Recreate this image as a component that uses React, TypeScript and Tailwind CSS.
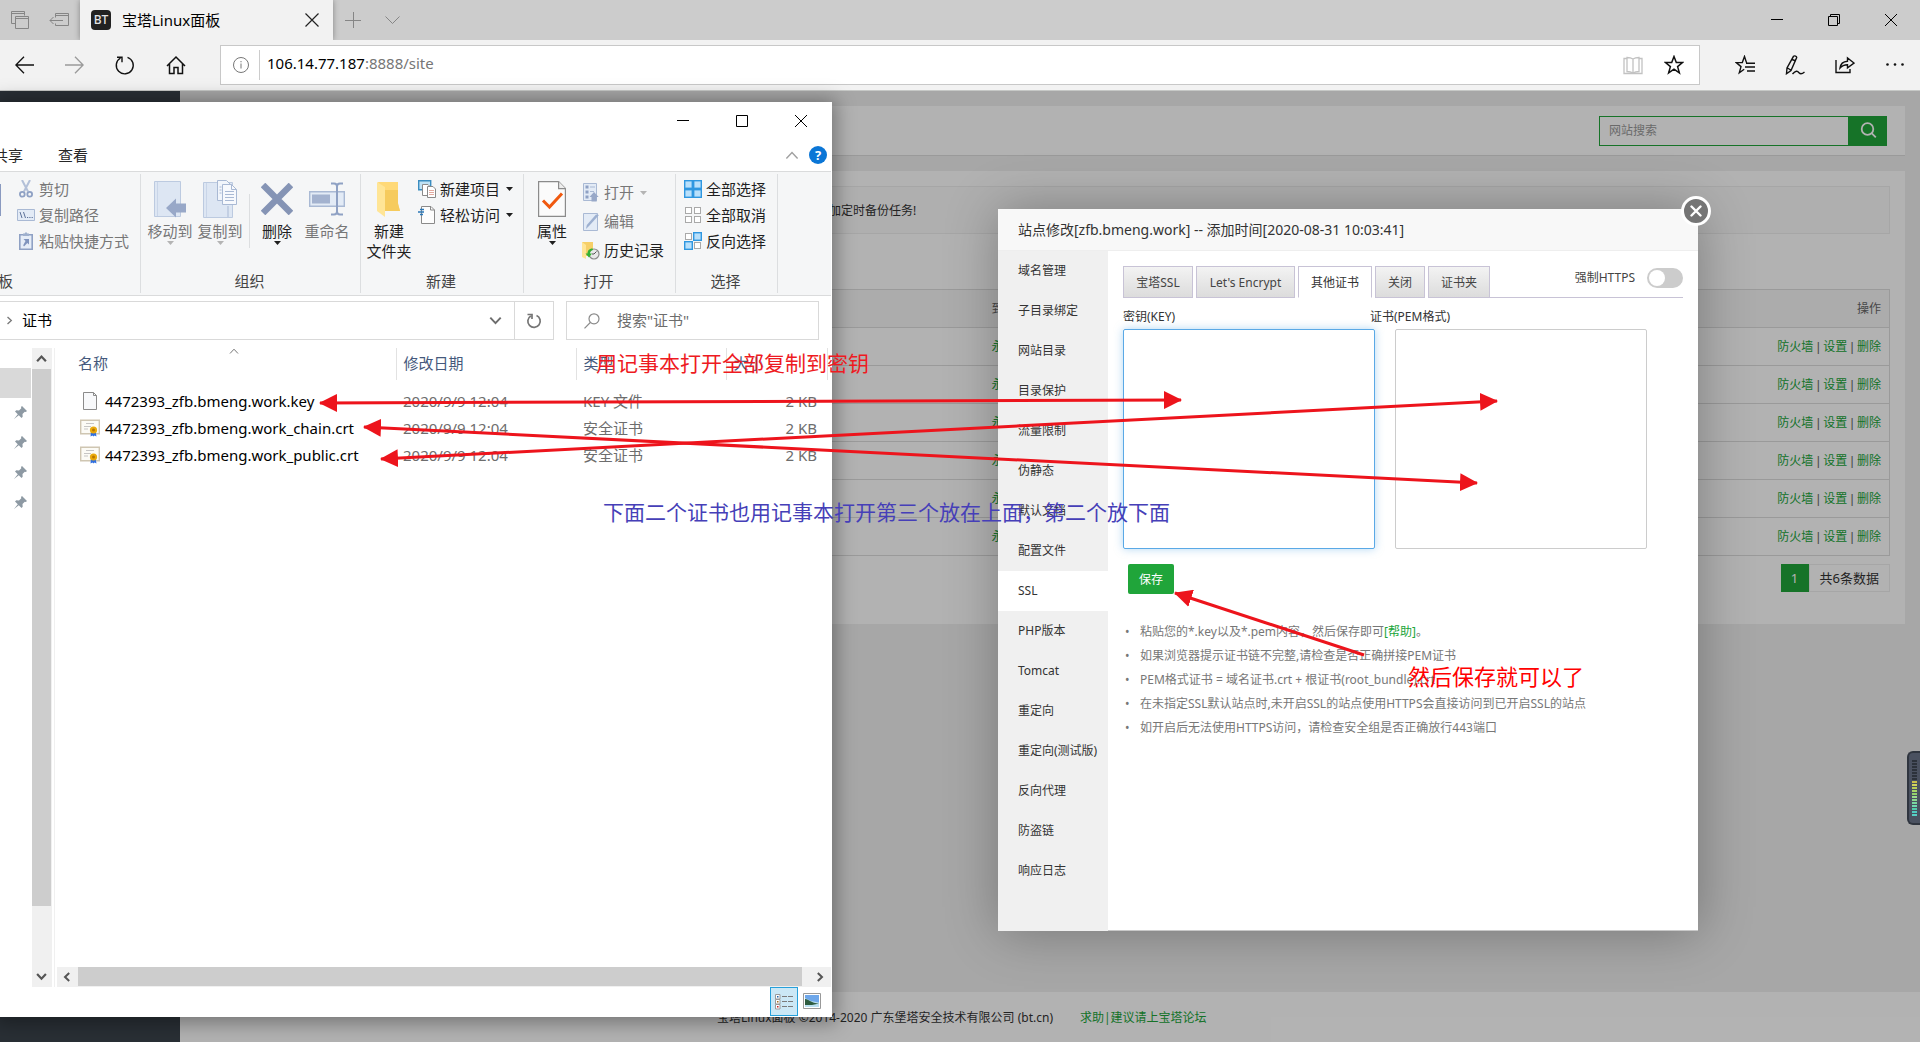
import React from "react";

const GREY = "#5f6368";

/* ---------- shared glyphs ---------- */

function Chevron({ dir, size = 10, color = GREY, weight = 2 }: { dir: "up" | "down" | "left" | "right"; size?: number; color?: string; weight?: number }) {
  const d = {
    up: "M1 7.5 5 3.2 9 7.5",
    down: "M1 2.8 5 7 9 2.8",
    left: "M7.2 1 3 5 7.2 9",
    right: "M2.8 1 7 5 2.8 9",
  }[dir];
  return (
    <svg width={size} height={size} viewBox="0 0 10 10" fill="none" stroke={color} strokeWidth={weight} className="shrink-0" aria-hidden="true">
      <path d={d} />
    </svg>
  );
}

function Caret({ muted = false }: { muted?: boolean }) {
  return (
    <svg width="7" height="4" viewBox="0 0 7 4" fill={muted ? "#b4b4b4" : "#1f1f1f"} className="shrink-0" aria-hidden="true">
      <path d="M0 0h7L3.5 4z" />
    </svg>
  );
}

/* ---------- browser chrome ---------- */

function TabStrip() {
  return (
    <div className="flex h-10 items-stretch bg-[#cccccc]">
      <div className="flex w-20 items-center gap-5 pl-[11px]">
        <button type="button" aria-label="标签页组" className="flex">
          <svg width="18" height="18" viewBox="0 0 18 18" fill="none" stroke="#858585">
            <path d="M4.5 12.5h-4v-12h13v4M.5 2.5h13M4.5 5.5h13v12h-13zM4.500 7.500h13" />
          </svg>
        </button>
        <button type="button" aria-label="搁置标签页" className="flex">
          <svg width="20" height="14" viewBox="0 0 20 14" fill="none" stroke="#858585">
            <path d="M6.500 4.500v-4h13v12h-13v-2M6.500 2.500h13M14 7.500H1M4.500 4 1 7.500 4.500 11" />
          </svg>
        </button>
      </div>
      <div className="flex w-[253px] items-center bg-[#f2f2f2] pl-[11px] pr-[14px] shadow-[0_0_6px_rgba(0,0,0,0.35)]">
        <span className="flex size-5 items-center justify-center rounded bg-[#222222] text-xs font-medium leading-5 text-[#e4e4e4]">BT</span>
        <span className="ml-[11px] flex-1 pb-px text-[15px] leading-5 text-black">宝塔Linux面板</span>
        <button type="button" aria-label="关闭标签页" className="flex">
          <svg width="14" height="14" viewBox="0 0 14 14" stroke="#222" strokeWidth="1.200"><path d="M.5.5l13 13M13.500.5l-13 13" /></svg>
        </button>
      </div>
      <div className="flex flex-1 items-center gap-6 pl-3">
        <button type="button" aria-label="新建标签页" className="flex">
          <svg width="16" height="16" viewBox="0 0 16 16" stroke="#858585"><path d="M0 8.500h16M8.500 0v16" /></svg>
        </button>
        <button type="button" aria-label="标签页预览" className="flex">
          <svg width="15" height="9" viewBox="0 0 15 9" fill="none" stroke="#858585"><path d="M.5.5l7 7 7-7" /></svg>
        </button>
      </div>
      <div className="flex items-center gap-[45px] pr-[23px]">
        <button type="button" aria-label="最小化" className="flex">
          <svg width="12" height="12" viewBox="0 0 12 12" stroke="#000"><path d="M0 5.500h12" /></svg>
        </button>
        <button type="button" aria-label="还原" className="flex">
          <svg width="12" height="12" viewBox="0 0 12 12" fill="none" stroke="#000"><path d="M.5 2.500h9v9h-9zM2.500 2V.5h9v9H10" /></svg>
        </button>
        <button type="button" aria-label="关闭" className="flex">
          <svg width="12" height="12" viewBox="0 0 12 12" stroke="#000"><path d="M0 0l12 12M12 0L0 12" /></svg>
        </button>
      </div>
    </div>
  );
}

const STAR = "M10 1.500l2.300 6.100h6.200l-4.900 4 1.800 6.300L10 14.200l-5.400 3.700 1.800-6.300-4.900-4h6.200z";

function AddressRow() {
  return (
    <div className="flex h-[51px] items-center border-b border-[#c6c8c6] bg-[#f2f2f2]">
      <div className="flex w-[220px] shrink-0 items-center gap-[31px] pl-[15px]">
        <button type="button" aria-label="后退" className="flex">
          <svg width="19" height="18" viewBox="0 0 19 18" fill="none" stroke="#111" strokeWidth="1.300"><path d="M19 9H1M9 .8.9 9 9 17.200" /></svg>
        </button>
        <button type="button" aria-label="前进" className="flex">
          <svg width="19" height="18" viewBox="0 0 19 18" fill="none" stroke="#9a9a9a" strokeWidth="1.300"><path d="M0 9h18M10 .8 18.100 9 10 17.200" /></svg>
        </button>
        <button type="button" aria-label="刷新" className="flex">
          <svg width="20" height="20" viewBox="0 0 20 20" fill="none" stroke="#111" strokeWidth="1.400"><path d="M12.500 2.300a8.500 8.500 0 1 1-7 .7M2 2.200h5v5" /></svg>
        </button>
        <button type="button" aria-label="主页" className="flex">
          <svg width="20" height="20" viewBox="0 0 20 20" fill="none" stroke="#111" strokeWidth="1.500"><path d="M1 11l9-9 9 9M3.500 9v9.500h4.500v-6h4v6h4.500V9" /></svg>
        </button>
      </div>
      <div className="flex h-10 flex-1 items-center border border-[#c8c8c8] bg-white pl-3 pr-[15px]">
        <svg width="16" height="16" viewBox="0 0 16 16" fill="none" stroke="#777" aria-hidden="true"><circle cx="8" cy="8" r="7.500" /><path d="M8 6.500v5M8 4v1.300" /></svg>
        <div className="ml-[10px] h-[30px] border-l border-[#cccccc]" />
        <div className="ml-[7px] flex-1 pb-1 text-[15px] leading-5 text-[#767676]"><span className="text-black">106.14.77.187</span>:8888/site</div>
        <button type="button" aria-label="阅读视图" className="mr-[21px] flex">
          <svg width="20" height="19" viewBox="0 0 20 19" fill="none" stroke="#c2c2c2" strokeWidth="1.300"><path d="M4 2.500H1v15h18v-15h-3M10 3c-2-1.300-4-1.500-6-1.500v14c2 0 4 .2 6 1.500 2-1.300 4-1.500 6-1.500v-14c-2 0-4 .2-6 1.500zM10 3v14" /></svg>
        </button>
        <button type="button" aria-label="添加到收藏夹" className="flex">
          <svg width="20" height="20" viewBox="0 0 20 20" fill="none" stroke="#111" strokeWidth="1.500"><path d={STAR} /></svg>
        </button>
      </div>
      <div className="flex w-[220px] shrink-0 items-center justify-end gap-[30px] pr-[15px]">
        <button type="button" aria-label="收藏夹" className="flex">
          <svg width="20" height="20" viewBox="0 0 20 20" fill="none" stroke="#111" strokeWidth="1.400"><path d="M11.500 7.600 9.500 1.500 7.300 7.600H1.200l4.800 4-1.700 6.200 4.900-3.500M11 8.200h9M10 12h10M12 16h8" /></svg>
        </button>
        <button type="button" aria-label="添加笔记" className="flex">
          <svg width="20" height="20" viewBox="0 0 20 20" fill="none" stroke="#111" strokeWidth="1.400"><path d="M8.500 1.300c1-.9 3.300-.2 3.200 1.300L6 15.500l-4.500 3.200L2 13zM7 4.500l4 1.500M2.500 13l3.200 2M7.500 19c3-3.500 5-3.500 6.500-1.200 1.500 1.700 3.200 1.200 5.500-.8" /></svg>
        </button>
        <button type="button" aria-label="共享" className="flex">
          <svg width="20" height="20" viewBox="0 0 20 20" fill="none" stroke="#111" strokeWidth="1.400"><path d="M1 5v12.500h14V14M5 13c.5-4 3-6.500 7.500-6.800V3l6.500 5-6.500 4.800V9.700C9.500 9.700 7 10.600 5 13z" /></svg>
        </button>
        <button type="button" aria-label="设置及其他" className="flex">
          <svg width="20" height="20" viewBox="0 0 20 20" fill="#111"><circle cx="2.500" cy="9.500" r="1.300" /><circle cx="10" cy="9.500" r="1.300" /><circle cx="17.500" cy="9.500" r="1.300" /></svg>
        </button>
      </div>
    </div>
  );
}

/* ---------- panel page behind the windows ---------- */

const SITE_ROWS = [1, 2, 3, 4, 5, 6];

function SitePage() {
  return (
    <div className="flex min-h-full flex-1 text-xs">
      <aside className="w-[180px] shrink-0 bg-[#3c444d]" />
      <div className="flex flex-1 flex-col bg-[#f0f0f0]">
        <div className="flex flex-1 flex-col px-[15px] pt-[15px]">
          <div className="flex h-[50px] items-center justify-end border-b border-[#dddddd] bg-white pr-[18px]">
            <form className="flex h-[30px]">
              <input type="text" aria-label="网站搜索" placeholder="网站搜索" className="w-[250px] border border-[#20a53a] bg-white px-[9px] pt-px text-xs placeholder:text-[#999999]" />
              <button type="button" aria-label="搜索" className="flex w-[38px] items-center justify-center bg-[#20a53a]">
                <svg width="17" height="17" viewBox="0 0 17 17" fill="none" stroke="#fff" strokeWidth="1.800"><circle cx="7.500" cy="7" r="5.800" /><path d="M11.800 11.300l4 4" /></svg>
              </button>
            </form>
          </div>
          <div className="mt-[15px] bg-white px-[15px] pb-8 pt-[15px]">
            <div className="flex h-12 items-center border border-[#eeeeee] bg-[#fbfbfb] pl-[618px] pt-px text-[#333333]">加定时备份任务!</div>
            <table className="mt-[55px] w-full table-fixed border-collapse border border-[#dddddd]">
              <colgroup>
                <col className="w-[773px]" />
                <col />
                <col className="w-[200px]" />
              </colgroup>
              <thead>
                <tr className="h-[38px] border-b border-[#dddddd] bg-[#f6f6f6] text-[#666666]">
                  <th />
                  <th className="pl-2 text-left font-normal">到期时间</th>
                  <th className="pr-2 text-right font-normal">操作</th>
                </tr>
              </thead>
              <tbody>
                {SITE_ROWS.map((row) => (
                  <tr key={row} className="h-[38px] border-b border-[#dddddd] text-[#666666]">
                    <td />
                    <td className="pl-2"><a href="#expire" className="text-[#20a53a]">永久</a></td>
                    <td className="pr-2 text-right font-['Liberation_Sans','Noto_Sans_CJK_SC',sans-serif]">
                      <a href="#firewall" className="text-[#20a53a]">防火墙</a> | <a href="#settings" className="text-[#20a53a]">设置</a> | <a href="#delete" className="text-[#20a53a]">删除</a>
                    </td>
                  </tr>
                ))}
              </tbody>
            </table>
            <div className="mt-2 flex h-7 justify-end text-[13px] leading-7">
              <span className="w-7 bg-[#20a53a] text-center text-white">1</span>
              <span className="flex items-center border border-[#eeeeee] px-[10px] text-[#333333]">共6条数据</span>
            </div>
          </div>
        </div>
        <footer className="flex h-[50px] items-center gap-[27px] bg-white pl-[537px] pt-[2px] text-[#333333]">
          <span>宝塔Linux面板 ©2014-2020 广东堡塔安全技术有限公司 (bt.cn)</span>
          <a href="#forum" className="text-[#20a53a]">求助|建议请上宝塔论坛</a>
        </footer>
      </div>
    </div>
  );
}

/* ---------- file explorer ---------- */

function BigButton({ icon, label, caret, muted, className }: { icon: React.ReactNode; label: string[]; caret?: boolean; muted?: boolean; className: string }) {
  return (
    <button type="button" className={`flex flex-col items-center pt-[7px] ${muted ? "text-[#777777]" : "text-[#1f1f1f]"} ${className}`}>
      <span className="mb-1 flex h-9 items-center justify-center">{icon}</span>
      {label.map((line) => (
        <span key={line} className="whitespace-nowrap leading-5">{line}</span>
      ))}
      {caret && <Caret muted={muted} />}
    </button>
  );
}

function SmallButton({ icon, label, caret, muted, tall }: { icon: React.ReactNode; label: string; caret?: boolean; muted?: boolean; tall?: boolean }) {
  return (
    <button type="button" className={`flex items-center whitespace-nowrap ${tall ? "h-[29px]" : "h-[26px]"} ${muted ? "text-[#777777]" : "text-[#1f1f1f]"}`}>
      <span className="mr-1 flex w-[18px] justify-center">{icon}</span>
      <span className="mr-[6px] pb-px leading-5">{label}</span>
      {caret && <Caret muted={muted} />}
    </button>
  );
}

function Group({ label, className, children }: { label: string; className: string; children: React.ReactNode }) {
  return (
    <div className={`flex shrink-0 flex-col border-r border-[#dcdee0] ${className}`}>
      <div className="flex flex-1 items-start">{children}</div>
      <div className="flex h-[22px] items-start justify-center pr-[2px] leading-5 text-[#444444]">{label}</div>
    </div>
  );
}

const iconCut = (
  <svg width="14" height="18" viewBox="0 0 14 18" fill="none" stroke="#8fa1c4" strokeWidth="1.800"><path d="M3 0l6 11.500M11 0L5 11.500" strokeWidth="2" stroke="#b3c0d8" /><circle cx="3.300" cy="14.300" r="2.400" /><circle cx="10.700" cy="14.300" r="2.400" /></svg>
);
const iconPath = (
  <svg width="18" height="12" viewBox="0 0 18 12"><path d="M.5.5h17v11H.5z" fill="#e3ebf6" stroke="#a9b9d4" /><path d="M3 3l2 6M6.500 3l2 6M10 8.500h1.200M12.300 8.500h1.200M14.600 8.500h1.200" stroke="#5c7199" fill="none" /></svg>
);
const iconShortcut = (
  <svg width="14" height="18" viewBox="0 0 14 18"><path d="M.8 2.800h12.400v14.400H.8z" fill="#e6edf7" stroke="#8fa1c4" strokeWidth="1.600" /><path d="M4 1.500h1.500L7 0l1.500 1.500H10V4H4z" fill="#9fb0cd" /><path d="M4.500 7H10v5.500L8.300 11 5 14.500l-.8-1.300L6.500 9z" fill="#8094bd" /></svg>
);
const iconMove = (
  <svg width="32" height="37" viewBox="0 0 32 37"><path d="M.5.5h26v35H.5z" fill="#dde6f3" stroke="#bccae0" /><path d="M3.500 1v34" stroke="#c9d5e8" /><path d="M32 22.500v9H22v5L12 27l10-9.500v5z" fill="#98a8c8" /></svg>
);
const iconCopyTo = (
  <svg width="34" height="38" viewBox="0 0 34 38"><path d="M.5 2.500h29v35H.5z" fill="#dde6f3" stroke="#bccae0" /><path d="M3.500 3v34" stroke="#c9d5e8" /><path d="M14.500.5h9l4 4v16h-13z" fill="#f1f5fb" stroke="#a9b9d4" /><path d="M19.500 4.500h9l5 5v15h-14z" fill="#f7f9fd" stroke="#a9b9d4" /><path d="M28.500 4.500v5h5M22 11.500h9M22 14.500h9M22 17.500h9M22 20.500h9M16.500 7h2M16.500 10h2M16.500 13h2M25 26v11" stroke="#a9b9d4" fill="none" /></svg>
);
const iconDelete = (
  <svg width="32" height="32" viewBox="0 0 32 32"><path d="M2 2l28 28M30 2L2 30" stroke="#8594b5" strokeWidth="6.500" /></svg>
);
const iconRename = (
  <svg width="36" height="34" viewBox="0 0 36 34"><path d="M.7 9.700h34.600v14.600H.7z" fill="#e3ebf6" stroke="#a9b9d4" strokeWidth="1.400" /><path d="M3 12.500h18v9H3z" fill="#a3b2cf" /><path d="M22 1.500h3c2 0 3 1 3 3v25c0 2-1 3-3 3h-3M34 1.500h-3c-2 0-3 1-3 3v25c0 2 1 3 3 3h3" fill="none" stroke="#8fa1c4" strokeWidth="2" /></svg>
);
const iconFolder = (
  <svg width="24" height="35" viewBox="0 0 24 35"><path d="M1 0h20v21l2 8H8z" fill="#ffd978" /><path d="M8 8h13v14l2 7H8z" fill="#f6cb5d" /><path d="M0 0l8 5v30L0 29z" fill="#ffe596" /></svg>
);
const iconNewItem = (
  <svg width="18" height="18" viewBox="0 0 18 18"><path d="M.7.7h12v9H.7z" fill="#bfe2f5" stroke="#3b8dc0" strokeWidth="1.400" /><path d="M4.500 4.500H10l2 2v9H4.500z" fill="#fff" stroke="#8a8a8a" /><path d="M9.500 6.500H15l2.500 2.500v8.500h-8z" fill="#fff" stroke="#8a8a8a" /><path d="M11 10.500h5M11 12.500h5M11 14.500h5" stroke="#e3aaa0" /></svg>
);
const iconEasy = (
  <svg width="18" height="18" viewBox="0 0 18 18"><path d="M3.500.5H13L16.500 4v13.500h-13z" fill="#fdfdfd" stroke="#8a8a8a" /><path d="M12.500.5V4h4" stroke="#8a8a8a" fill="none" /><path d="M2 3.500h4M0 6h6M2 8.500h3" stroke="#2b78b8" strokeWidth="1.400" /></svg>
);
const iconProps = (
  <svg width="28" height="36" viewBox="0 0 28 36"><path d="M.6.6h20l6.800 7v27.800H.6z" fill="#fbfbfb" stroke="#8b8b8b" strokeWidth="1.200" /><path d="M20.600.6v7h6.800" fill="#eee" stroke="#8b8b8b" strokeWidth="1.200" /><path d="M5 19.500l6.500 6.500L24 12.500" fill="none" stroke="#f0590f" strokeWidth="3" /></svg>
);
const iconOpen = (
  <svg width="16" height="19" viewBox="0 0 16 19"><path d="M.5.5h13v17H.5z" fill="#e3ebf6" stroke="#a9b9d4" /><path d="M2.500 2.500h3v3h-3zM2.500 7.500h3v3h-3zM2.500 12.500h3v3h-3z" fill="#8fa1c4" /><path d="M7 4h5M7 8.500h4" stroke="#a9b9d4" /><path d="M8.500 18.500v-4.500H6.500L11 9l4.700 5h-2v4.500z" fill="#98a8c8" /></svg>
);
const iconEdit = (
  <svg width="17" height="18" viewBox="0 0 17 18"><path d="M.5.5h14v17H.5z" fill="#e3ebf6" stroke="#a9b9d4" /><path d="M16 2L6 13l-3 3 .8-4L13 1.500z" fill="#9db0d0" /></svg>
);
const iconHistory = (
  <svg width="18" height="19" viewBox="0 0 18 19"><path d="M0 1h11v14H4z" fill="#f6cf68" /><path d="M0 1l4 3v14l-4-2z" fill="#ffe596" /><circle cx="12" cy="13" r="5" fill="#e8e8e8" stroke="#8a8a8a" strokeWidth="1.200" /><path d="M12 13l2.500-2.500M12 13h-2" stroke="#555" fill="none" /><path d="M10.500 7.500C7 7.500 5.500 10 5.500 12.500H3.500l3.500 4 3-4H8c0-2 1-3 3-3.500z" fill="#34b233" /></svg>
);

function Cells({ on }: { on: boolean[] }) {
  return (
    <svg width="18" height="18" viewBox="0 0 18 18" aria-hidden="true">
      {on.map((active, i) => {
        const x = (i % 2) * 9;
        const y = Math.floor(i / 2) * 9;
        return active ? (
          <rect key={i} x={x + 0.7} y={y + 0.7} width="7.6" height="7.6" fill="#b9e0fb" stroke="#2f97e0" strokeWidth="1.400" />
        ) : (
          <rect key={i} x={x + 1.5} y={y + 1.5} width="6" height="6" fill="#fff" stroke="#a9a9a9" />
        );
      })}
    </svg>
  );
}

function Ribbon() {
  return (
    <div className="mr-px flex h-[125px] border-y border-[#dadbdc] bg-[#f5f6f7] py-[2px] text-[15px]">
      <div className="flex w-[141px] shrink-0 flex-col border-r border-[#dcdee0]">
        <div className="flex flex-1 items-start">
          <div className="mt-[10px] h-8 w-px bg-[#8a9ac0]" />
          <div className="flex flex-col items-start pl-4 pt-[2px]">
            <SmallButton muted icon={iconCut} label="剪切" />
            <SmallButton muted icon={iconPath} label="复制路径" />
            <SmallButton muted icon={iconShortcut} label="粘贴快捷方式" />
          </div>
        </div>
        <div className="flex h-[22px] w-[13px] items-start justify-end overflow-hidden whitespace-nowrap leading-5 text-[#444444]"><span className="shrink-0">剪贴板</span></div>
      </div>
      <Group label="组织" className="w-[220px]">
        <BigButton muted caret className="ml-1 w-[50px]" icon={iconMove} label={["移动到"]} />
        <BigButton muted caret className="w-[50px]" icon={iconCopyTo} label={["复制到"]} />
        <div className="ml-1 mt-5 h-[54px] w-px bg-[#dcdee0]" />
        <BigButton caret className="ml-[3px] w-[48px]" icon={iconDelete} label={["删除"]} />
        <BigButton muted className="ml-px w-[50px]" icon={iconRename} label={["重命名"]} />
      </Group>
      <Group label="新建" className="w-[163px]">
        <BigButton className="ml-[3px] w-[50px]" icon={iconFolder} label={["新建", "文件夹"]} />
        <div className="ml-1 flex flex-col items-start pt-[2px]">
          <SmallButton caret icon={iconNewItem} label="新建项目" />
          <SmallButton caret icon={iconEasy} label="轻松访问" />
        </div>
      </Group>
      <Group label="打开" className="w-[152px]">
        <BigButton caret className="ml-[3px] w-[50px]" icon={iconProps} label={["属性"]} />
        <div className="ml-[5px] flex flex-col items-start pt-1">
          <SmallButton tall muted caret icon={iconOpen} label="打开" />
          <SmallButton tall muted icon={iconEdit} label="编辑" />
          <SmallButton tall icon={iconHistory} label="历史记录" />
        </div>
      </Group>
      <Group label="选择" className="w-[102px]">
        <div className="flex flex-col items-start pl-2 pt-[2px]">
          <SmallButton icon={<Cells on={[true, true, true, true]} />} label="全部选择" />
          <SmallButton icon={<Cells on={[false, false, false, false]} />} label="全部取消" />
          <SmallButton icon={<Cells on={[false, true, true, false]} />} label="反向选择" />
        </div>
      </Group>
    </div>
  );
}

const iconBlankFile = (
  <svg width="20" height="18" viewBox="0 0 20 18"><path d="M3.500.5h10l3 3v14h-13z" fill="#f8f9fb" stroke="#8b8b8b" /><path d="M13.500.5v3h3" fill="none" stroke="#8b8b8b" /></svg>
);
const iconCert = (
  <svg width="20" height="18" viewBox="0 0 20 18"><path d="M.7 1.200h18.600v13.600H.7z" fill="#fcfbf6" stroke="#cfc6b2" strokeWidth="1.400" /><path d="M6 4.500h8M4 7.500h7M4 10h4" stroke="#b9b9b9" strokeWidth=".8" /><path d="M11 12l-.5 5.500 2-1 1 1V12zM15.500 12l1 5.500-2-1-1 1V12z" fill="#2f6fe0" /><circle cx="13.500" cy="11" r="3.600" fill="#e9a90c" /><circle cx="13.500" cy="11" r="1.500" fill="#b87600" /></svg>
);

const FILES = [
  { name: "4472393_zfb.bmeng.work.key", type: "KEY 文件", icon: iconBlankFile },
  { name: "4472393_zfb.bmeng.work_chain.crt", type: "安全证书", icon: iconCert },
  { name: "4472393_zfb.bmeng.work_public.crt", type: "安全证书", icon: iconCert },
];

function FileList() {
  return (
    <table className="w-full table-fixed border-collapse text-[15px]">
      <colgroup>
        <col className="w-[341px]" />
        <col className="w-[180px]" />
        <col className="w-[150px]" />
        <col className="w-[101px]" />
        <col />
      </colgroup>
      <thead>
        <tr className="h-8 text-left leading-5 text-[#45597c]">
          <th className="relative border-r border-[#e2e2e2] pb-[2px] pl-[23px] font-normal">
            名称
            <span className="absolute -top-[2px] left-[174px] flex"><Chevron dir="up" size={10} color="#777" weight={1} /></span>
          </th>
          <th className="border-r border-[#e2e2e2] pb-[2px] pl-[7px] font-normal">修改日期</th>
          <th className="border-r border-[#e2e2e2] pb-[2px] pl-[7px] font-normal">类型</th>
          <th className="border-r border-[#e2e2e2] pb-[2px] pl-[7px] font-normal">大小</th>
          <th />
        </tr>
      </thead>
      <tbody>
        <tr className="h-[7px]"><td colSpan={5} /></tr>
        {FILES.map((file) => (
          <tr key={file.name} className="h-[27px] leading-5 text-[#6d6d6d]">
            <td className="pl-[25px] text-black">
              <span className="flex items-center gap-[5px] whitespace-nowrap">{file.icon}{file.name}</span>
            </td>
            <td className="pl-[7px]">2020/9/9 12:04</td>
            <td className="pl-[7px]">{file.type}</td>
            <td className="pr-[10px] text-right">2 KB</td>
            <td />
          </tr>
        ))}
      </tbody>
    </table>
  );
}

function Pin() {
  return (
    <svg width="13" height="13" viewBox="0 0 13 13" fill="#8d99a3" aria-hidden="true"><path d="M8 0l5 5-1.200 1-1-.3L8.500 8l.2 2.700L7.500 12 4.800 9.200 0 13l3.800-4.800L1 5.500l1.300-1.200L5 4.500l2.300-2.300L7 1z" /></svg>
  );
}

function Explorer() {
  return (
    <section aria-label="证书" className="absolute left-0 top-[102px] flex h-[915px] w-[832px] flex-col overflow-hidden bg-white">
      <div className="flex h-[38px] items-center justify-end gap-[47px] pr-[25px]">
        <button type="button" aria-label="最小化" className="flex"><svg width="12" height="12" viewBox="0 0 12 12" stroke="#000"><path d="M0 5.500h12" /></svg></button>
        <button type="button" aria-label="最大化" className="flex"><svg width="12" height="12" viewBox="0 0 12 12" fill="none" stroke="#000"><path d="M.5.5h11v11H.5z" /></svg></button>
        <button type="button" aria-label="关闭" className="flex"><svg width="12" height="12" viewBox="0 0 12 12" stroke="#000"><path d="M0 0l12 12M12 0L0 12" /></svg></button>
      </div>
      <div className="flex h-[31px] items-center pb-px pr-[5px] text-[15px] text-[#262626]">
        <button type="button" className="flex w-[23px] justify-end overflow-hidden whitespace-nowrap"><span className="shrink-0">共享</span></button>
        <button type="button" className="ml-[35px]">查看</button>
        <button type="button" aria-label="折叠功能区" className="ml-auto flex"><Chevron dir="up" size={14} color="#a0a0a0" weight={1} /></button>
        <button type="button" aria-label="帮助" className="ml-[10px] flex size-[18px] items-center justify-center rounded-full bg-[#0b76d6] text-[13px] font-bold leading-none text-white">?</button>
      </div>
      <Ribbon />
      <div className="mt-[5px] flex h-[39px] pr-[13px] text-[15px]">
        <div className="flex flex-1 items-center border border-l-0 border-[#d9d9d9]">
          <span className="ml-[5px] flex"><Chevron dir="right" size={9} color="#7a7a7a" weight={1.5} /></span>
          <span className="ml-2 flex-1 text-black">证书</span>
          <button type="button" aria-label="以前的位置" className="mr-3 flex"><Chevron dir="down" size={13} color="#6d6d6d" weight={1.5} /></button>
          <button type="button" aria-label="刷新" className="flex h-full w-[39px] items-center justify-center border-l border-[#d9d9d9]">
            <svg width="16" height="16" viewBox="0 0 16 16" fill="none" stroke="#757575" strokeWidth="1.700"><path d="M10.500 2.500a6.200 6.200 0 1 1-5.700.4M1.500 1.500H6v4.500" /></svg>
          </button>
        </div>
        <label className="ml-3 flex w-[253px] items-center border border-[#d9d9d9] pl-[17px]">
          <svg width="16" height="16" viewBox="0 0 16 16" fill="none" stroke="#8a8a8a" strokeWidth="1.200" aria-hidden="true"><circle cx="10" cy="5.800" r="5" /><path d="M6.300 9.500L.5 15.300" /></svg>
          <input type="text" aria-label="搜索证书" placeholder={'搜索"证书"'} className="ml-[17px] min-w-0 flex-1 bg-transparent text-[15px] placeholder:text-[#6d6d6d]" />
        </label>
      </div>
      <div className="mt-2 flex min-h-0 flex-1 overflow-hidden">
        <div className="w-8 shrink-0 pr-px pt-5">
          <div className="h-[30px] bg-[#d9d9d9]" />
          {[0, 1, 2, 3].map((n) => (
            <div key={n} className="flex h-[30px] items-center justify-end pb-[2px] pr-1"><Pin /></div>
          ))}
        </div>
        <div className="flex w-5 shrink-0 flex-col bg-[#f0f0f0] pr-px">
          <div className="flex h-[21px] items-center justify-center pr-px"><Chevron dir="up" size={11} color="#555" weight={2} /></div>
          <div className="flex-1 bg-[#cdcdcd]" />
          <div className="flex h-[81px] items-end justify-center pb-[5px] pr-px"><Chevron dir="down" size={11} color="#555" weight={2} /></div>
        </div>
        <div className="ml-[2px] flex min-w-0 flex-1 flex-col border-l border-[#f0f0f0]">
          <FileList />
          <div className="ml-[2px] mr-px mt-auto flex h-5 items-center bg-[#f0f0f0]">
            <div className="flex w-[21px] justify-center pr-[2px]"><Chevron dir="left" size={10} color="#555" weight={2} /></div>
            <div className="mb-px h-[19px] flex-1 bg-[#cdcdcd]" />
            <div className="flex w-[29px] justify-center pl-[6px]"><Chevron dir="right" size={10} color="#555" weight={2} /></div>
          </div>
        </div>
      </div>
      <div className="flex h-[30px] items-start justify-end gap-[5px] pr-[11px]">
        <button type="button" aria-label="详细信息" className="flex h-[29px] w-7 items-center justify-center border border-[#26a0da] bg-[#cbe8f6]">
          <svg width="18" height="16" viewBox="0 0 18 16" fill="none"><path d="M.5.500h4.500v4.500H.5zM.5 5.500h4.500V10H.5zM.5 10.500h4.500V15H.5z" fill="#fff" stroke="#9a9a9a" /><path d="M7 2.500h5M13 2.500h5M7 7.500h5M13 7.500h5M7 12.500h5M13 12.500h5" stroke="#7b7b7b" /><path d="M2 2h1.500v1.500H2z" fill="#1f62a8" /><path d="M2 7h1.500v1.500H2z" fill="#a86d1f" /><path d="M2 12h1.500v1.500H2z" fill="#d01f1f" /></svg>
        </button>
        <button type="button" aria-label="大图标" className="flex h-7 w-[18px] items-center">
          <svg width="18" height="16" viewBox="0 0 18 16"><path d="M.5.500h17v15H.5z" fill="#fff" stroke="#999" /><path d="M2 2h14v12H2z" fill="#6ea7ea" /><path d="M2 5l6 3 8 1.500V14H2z" fill="#b9dff0" /><path d="M2 6c4 .5 6 4 14 4.500L9 12H2z" fill="#2c5b3f" /></svg>
        </button>
      </div>
    </section>
  );
}

/* ---------- site settings dialog ---------- */

const MENU = ["域名管理", "子目录绑定", "网站目录", "目录保护", "流量限制", "伪静态", "默认文档", "配置文件", "SSL", "PHP版本", "Tomcat", "重定向", "重定向(测试版)", "反向代理", "防盗链", "响应日志"];

const TABS = [
  { label: "宝塔SSL", width: "w-[70px]" },
  { label: "Let's Encrypt", width: "w-[99px]" },
  { label: "其他证书", width: "w-[74px]" },
  { label: "关闭", width: "w-[50px]" },
  { label: "证书夹", width: "w-[62px]" },
];

const BULLET = "before:inline-block before:w-[15px] before:content-['•']";

function SiteDialog() {
  return (
    <section role="dialog" aria-label="站点修改" className="absolute left-[998px] top-[209px] w-[700px] bg-white text-xs text-[#333333] shadow-[1px_1px_50px_rgba(0,0,0,0.3)]">
      <h2 className="flex h-[42px] items-center border-b border-[#eeeeee] bg-[#f8f8f8] pl-5 text-sm">站点修改[zfb.bmeng.work] -- 添加时间[2020-08-31 10:03:41]</h2>
      <button type="button" aria-label="关闭" className="absolute -right-[13px] -top-[13px] flex size-[30px] items-center justify-center rounded-full border-[3px] border-white bg-[#757575]">
        <svg width="12" height="12" viewBox="0 0 12 12" stroke="#fff" strokeWidth="2.400" strokeLinecap="round"><path d="M1.500 1.500l9 9M10.500 1.500l-9 9" /></svg>
      </button>
      <div className="flex">
        <nav className="flex w-[110px] shrink-0 flex-col bg-[#f0f0f0] pb-10">
          {MENU.map((item) => (
            <a key={item} href={`#${item}`} className={`flex h-10 items-center whitespace-nowrap pl-5 ${item === "SSL" ? "bg-white" : ""}`}>{item}</a>
          ))}
        </nav>
        <div className="flex-1 border-b border-[#c8c8c8] px-[15px] pt-[15px]">
          <div className="flex items-end">
            <div role="tablist" className="flex gap-[3px]">
              {TABS.map(({ label, width }) => {
                const active = label === "其他证书";
                return (
                  <button
                    key={label}
                    type="button"
                    role="tab"
                    aria-selected={active}
                    className={`flex h-8 items-center justify-center whitespace-nowrap border border-[#c8c3d6] pt-px ${width} ${active ? "border-b-white bg-white" : "bg-linear-to-b from-[#f3f3f3] to-[#dcdcdc] text-[#444444]"}`}
                  >
                    {label}
                  </button>
                );
              })}
            </div>
            <label className="flex h-8 flex-1 items-start justify-end gap-3 border-b border-[#c8c3d6] text-[#444444]">
              <span className="leading-6">强制HTTPS</span>
              <input
                type="checkbox"
                role="switch"
                className="mt-[2px] h-5 w-9 appearance-none rounded-full border-2 border-[#cccccc] bg-[#cccccc] before:block before:size-4 before:rounded-full before:bg-white before:content-['']"
              />
            </label>
          </div>
          <div className="mt-[9px] flex leading-5">
            <label htmlFor="cert-key" className="w-[247px]">密钥(KEY)</label>
            <label htmlFor="cert-pem">证书(PEM格式)</label>
          </div>
          <div className="mt-[2px] flex gap-5">
            <textarea id="cert-key" className="h-[220px] w-[252px] resize-none rounded-xs border border-[#5aa9e6] shadow-[0_0_8px_rgba(102,175,233,0.5)] outline-none" />
            <textarea id="cert-pem" className="h-[220px] w-[252px] resize-none rounded-xs border border-[#cccccc]" />
          </div>
          <button type="button" className="ml-[5px] mt-[15px] h-[30px] w-[46px] rounded-xs bg-[#20a53a] pt-px text-white">保存</button>
          <ul className="mt-[26px] pl-[2px] leading-6 text-[#777777]">
            <li className={BULLET}>粘贴您的*.key以及*.pem内容，然后保存即可<a href="#help" className="text-[#20a53a]">[帮助]</a>。</li>
            <li className={BULLET}>如果浏览器提示证书链不完整,请检查是否正确拼接PEM证书</li>
            <li className={BULLET}>PEM格式证书 = 域名证书.crt + 根证书(root_bundle).crt</li>
            <li className={BULLET}>在未指定SSL默认站点时,未开启SSL的站点使用HTTPS会直接访问到已开启SSL的站点</li>
            <li className={BULLET}>如开启后无法使用HTTPS访问，请检查安全组是否正确放行443端口</li>
          </ul>
        </div>
      </div>
    </section>
  );
}

/* ---------- hand-drawn notes over the desktop ---------- */

const ARROWS = [
  { x1: 320, y1: 403, x2: 1181, y2: 400, both: true },
  { x1: 364, y1: 427, x2: 1477, y2: 483, both: true },
  { x1: 381, y1: 459, x2: 1497, y2: 401, both: true },
  { x1: 1175, y1: 593, x2: 1364, y2: 655, both: false },
];

function Notes() {
  return (
    <div className="pointer-events-none absolute inset-0 overflow-hidden">
      <p className="absolute left-[596px] top-[349px] whitespace-nowrap text-[21px] leading-7 text-[#ee1a22]">用记事本打开全部复制到密钥</p>
      <p className="absolute left-[603px] top-[498px] whitespace-nowrap text-[21px] leading-7 text-[#463fb8]">下面二个证书也用记事本打开第三个放在上面，第二个放下面</p>
      <p className="absolute left-[1408px] top-[662px] whitespace-nowrap text-[22px] leading-7 text-[#ff0000]">然后保存就可以了</p>
      <svg className="absolute left-0 top-0" width="1920" height="1042" viewBox="0 0 1920 1042" aria-hidden="true">
        <defs>
          <marker id="head" markerUnits="userSpaceOnUse" markerWidth="18" markerHeight="18" refX="17" refY="9" orient="auto-start-reverse">
            <path d="M0 0l18 9-18 9z" fill="#ed141c" />
          </marker>
        </defs>
        {ARROWS.map((a) => (
          <line key={a.x1} x1={a.x1} y1={a.y1} x2={a.x2} y2={a.y2} stroke="#ed141c" strokeWidth="3" markerStart="url(#head)" markerEnd={a.both ? "url(#head)" : undefined} />
        ))}
      </svg>
    </div>
  );
}

const METER = ["#2c323b", "#2c323b", "#2c323b", "#2c323b", "#2c323b", "#2c323b", "#2c323b", "#c9c04a", "#d2d45c", "#b9cf56", "#a8d568", "#93d36b", "#9ddc8c", "#8bd88f", "#79d6a0", "#6fd8ae", "#52ccab", "#4fcbc0", "#55d0c4"];

function LevelMeter() {
  return (
    <div className="absolute right-0 top-[751px] flex h-[74px] w-[13px] flex-col items-end justify-center gap-px overflow-hidden rounded-l-md border-2 border-r-0 border-[#2f353f] bg-[#4a5160] pr-[3px]">
      {METER.map((color, i) => (
        <i key={i} className="block h-[2px] w-[5px] shrink-0" style={{ backgroundColor: color }} />
      ))}
    </div>
  );
}

export default function App() {
  return (
    <div className="relative flex min-h-screen flex-col overflow-hidden font-['Noto_Sans','Noto_Sans_CJK_SC',sans-serif]">
      <TabStrip />
      <AddressRow />
      <main className="relative flex flex-1">
        <SitePage />
        <div className="absolute inset-0 bg-black/30" />
        <div className="absolute left-0 top-[11px] h-[915px] w-[832px] shadow-[0_2px_18px_4px_rgba(0,0,0,0.35)]" />
      </main>
      <SiteDialog />
      <Explorer />
      <LevelMeter />
      <Notes />
    </div>
  );
}
